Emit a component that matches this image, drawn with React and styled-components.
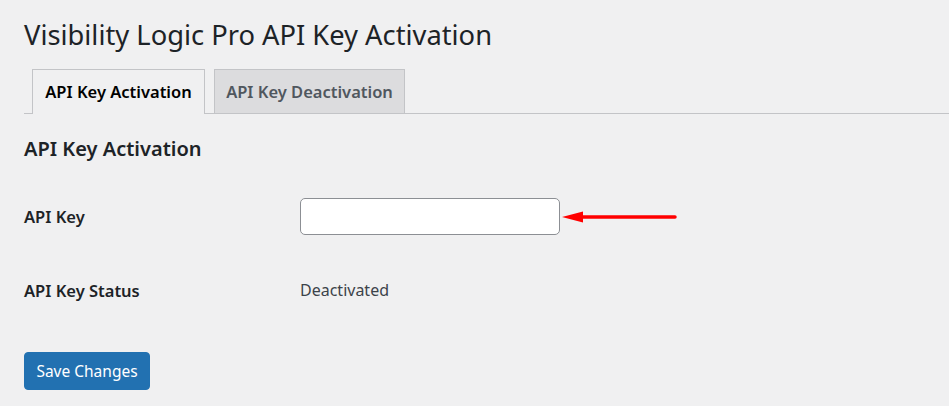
import React from "react";
import styled, { createGlobalStyle } from "styled-components";

const Global = createGlobalStyle`
  html, body { margin: 0; padding: 0; background: #f0f0f1; }
  body { font-family: "Noto Sans", "Open Sans", sans-serif; color: #1d2327; }
  * { box-sizing: border-box; }
`;

const Wrap = styled.div`
  padding: 16px 0 0 24px;
  width: 949px;
  height: 406px;
  overflow: hidden;
`;

const Title = styled.h1`
  margin: 0;
  font-size: 27.3px;
  font-weight: 400;
  line-height: 38px;
  height: 38px;
`;

const TabBar = styled.nav`
  display: flex;
  align-items: flex-end;
  gap: 9px;
  margin-top: 15px;
  padding-left: 8px;
  border-bottom: 1px solid #c3c4c7;
  height: 45px;
`;

const Tab = styled.a`
  display: flex;
  align-items: center;
  justify-content: center;
  width: ${(p) => p.$w}px;
  height: ${(p) => (p.$active ? "45px" : "44px")};
  margin-bottom: ${(p) => (p.$active ? "-1px" : "0")};
  padding-bottom: ${(p) => (p.$active ? "1px" : "0")};
  border: 1px solid #c3c4c7;
  border-bottom: none;
  background: ${(p) => (p.$active ? "#f0f0f1" : "#dcdcde")};
  color: ${(p) => (p.$active ? "#000" : "#50575e")};
  font-size: 16.5px;
  font-weight: 600;
  text-decoration: none;
`;

const Section = styled.h2`
  margin: 21px 0 0;
  font-size: 20px;
  font-weight: 600;
  line-height: 28px;
`;

const FormTable = styled.div`
  display: grid;
  grid-template-columns: 276px 1fr;
  margin-top: 35px;
`;

const Label = styled.div`
  display: flex;
  align-items: center;
  height: ${(p) => p.$h}px;
  font-size: 16.5px;
  font-weight: 600;
  color: #1d2327;
`;

const Cell = styled.div`
  display: flex;
  align-items: center;
  height: ${(p) => p.$h}px;
  font-size: 16px;
  color: #3c434a;
`;

const Input = styled.input`
  width: 260px;
  height: 37px;
  border: 1px solid #8c8f94;
  border-radius: 5px;
  background: #fff;
  padding: 0 10px;
  font: inherit;
  outline: none;
`;

const Button = styled.button`
  margin-top: 7px;
  width: 126px;
  height: 38px;
  background: #2271b1;
  border: 1px solid #2271b1;
  border-radius: 4px;
  color: #fff;
  font-family: inherit;
  font-size: 15.5px;
  padding: 0;
`;

const Arrow = () => (
  <svg width="118" height="16" viewBox="0 0 118 16" style={{ marginLeft: 2 }}>
    <line x1="18" y1="8" x2="113" y2="8" stroke="#ff0000" strokeWidth="3.5" strokeLinecap="round" />
    <polygon points="0,8 21,2.5 21,13.5" fill="#ff0000" />
  </svg>
);

export default function App() {
  return (
    <>
      <Global />
      <Wrap>
        <Title>Visibility Logic Pro API Key Activation</Title>
        <TabBar>
          <Tab $active $w={173}>API Key Activation</Tab>
          <Tab $w={191}>API Key Deactivation</Tab>
        </TabBar>
        <Section>API Key Activation</Section>
        <FormTable>
          <Label $h={37}>API Key</Label>
          <Cell $h={37}>
            <Input type="text" />
            <Arrow />
          </Cell>
          <Label $h={110}>API Key Status</Label>
          <Cell $h={110}>Deactivated</Cell>
        </FormTable>
        <Button>Save Changes</Button>
      </Wrap>
    </>
  );
}
